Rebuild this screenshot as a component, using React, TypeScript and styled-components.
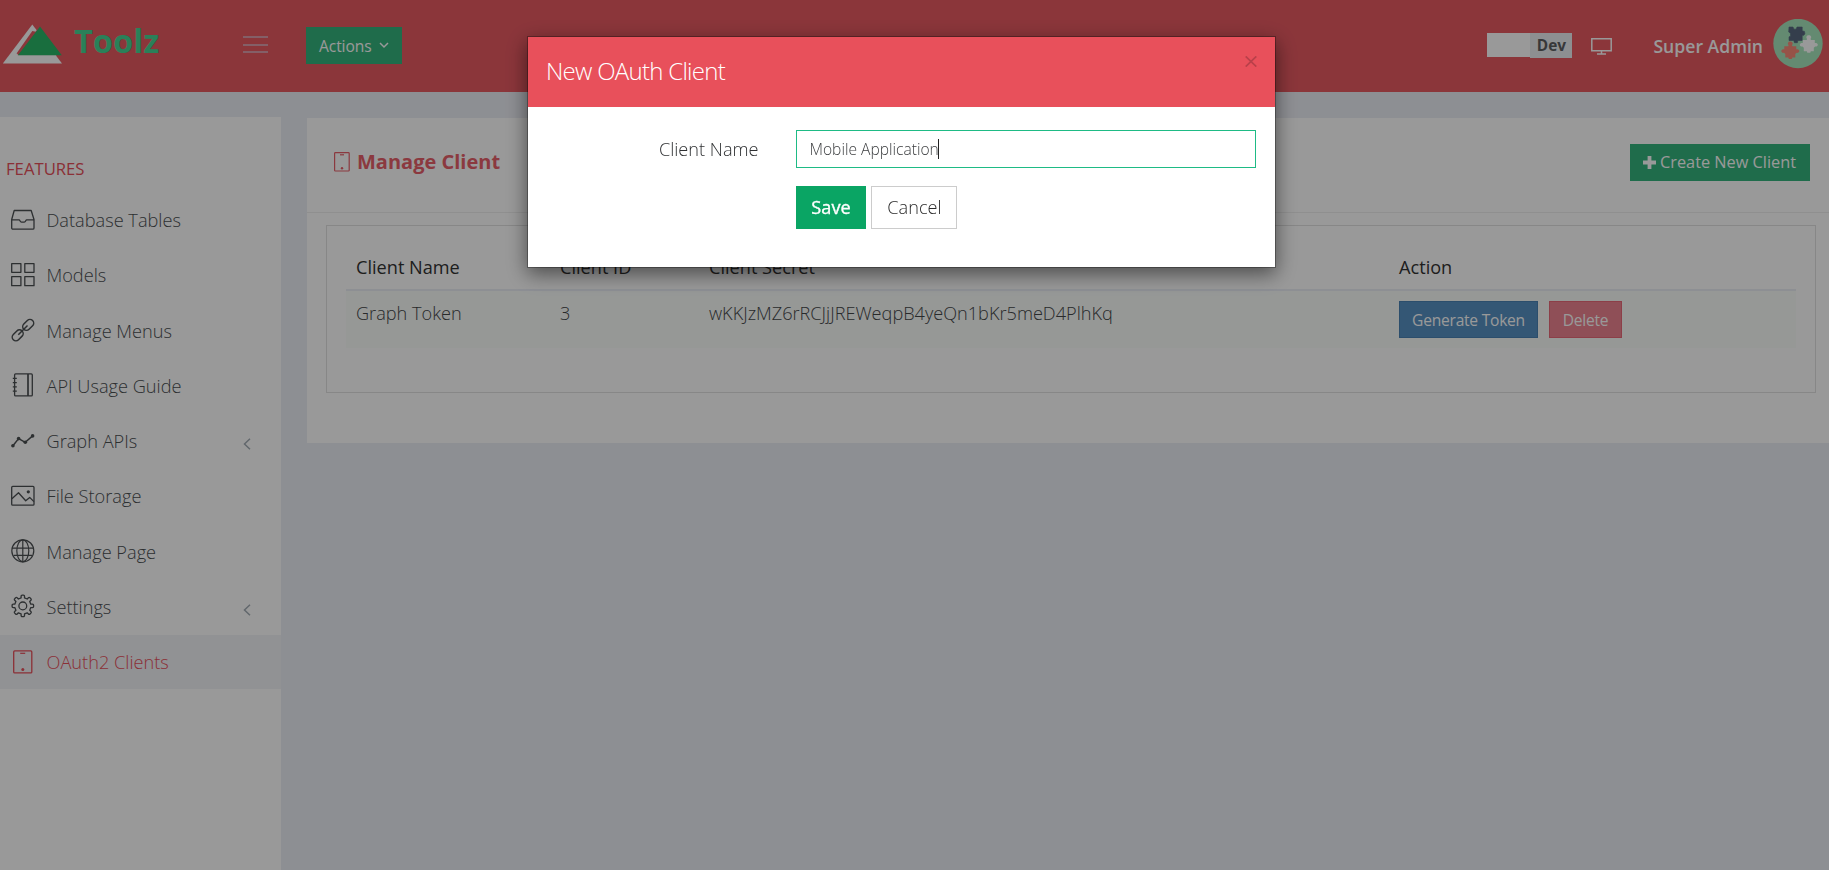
import React from 'react';
import styled, { createGlobalStyle, css } from 'styled-components';

const GlobalStyle = createGlobalStyle`
  * { box-sizing: border-box; }
  body {
    margin: 0;
    background: #eceef5;
    color: #444749;
    font: 300 18.15px/26px 'Open Sans', sans-serif;
    overflow: hidden;
  }
  button, input { font: inherit; border-radius: 0; margin: 0; }
`;

const Page = styled.div`
  height: 870px;
  display: flex;
  flex-direction: column;
`;

/* Header */
const Header = styled.header`
  height: 92px;
  flex: none;
  display: flex;
  background: #e85a62;
  color: #fff;
`;
const Brand = styled.div`
  width: 243px;
  display: flex;
  align-items: flex-start;
  padding: 24px 0 0 2px;
`;
const BrandName = styled.span`
  margin: -5px 0 0 11px;
  font-size: 32.6px;
  line-height: 44px;
  font-weight: 700;
  color: #46d594;
`;
const Burger = styled.div`
  width: 25px;
  height: 17px;
  margin-top: 36px;
  display: flex;
  flex-direction: column;
  justify-content: space-between;
`;
const BurgerLine = styled.span`
  height: 2px;
  background: #dc9fac;
`;
const ActionsButton = styled.button`
  width: 96px;
  height: 37px;
  margin: 27px 0 0 38px;
  padding: 0 13px;
  display: flex;
  align-items: center;
  justify-content: space-between;
  border: 0;
  background: #34b47d;
  color: #fff;
  font-size: 15.6px;
  font-weight: 400;
  letter-spacing: -0.1px;
`;
const HeaderRight = styled.div`
  margin-left: auto;
  padding: 0 6px 0 0;
  display: flex;
`;
const EnvBlank = styled.span`
  width: 43px;
  height: 24px;
  margin-top: 33px;
  background: #fff;
`;
const EnvTag = styled.span`
  width: 42px;
  height: 25px;
  margin-top: 33px;
  background: #eceef2;
  color: #5c5e61;
  font-size: 15.4px;
  line-height: 25px;
  font-weight: 700;
  text-align: center;
`;
const MonitorSlot = styled.span`
  display: flex;
  margin: 38px 0 0 19px;
`;
const UserName = styled.span`
  margin: 33px 10px 0 41px;
  font-size: 17.6px;
  font-weight: 600;
`;
const AvatarSlot = styled.span`
  display: flex;
  margin-top: 19px;
`;

/* Body */
const Body = styled.div`
  flex: 1;
  display: flex;
  align-items: stretch;
`;
const Sidebar = styled.nav`
  width: 281px;
  margin-top: 25px;
  padding-top: 39px;
  background: #fff;
`;
const SidebarTitle = styled.div`
  padding-left: 6px;
  margin-bottom: 11.3px;
  font-size: 16.7px;
  font-weight: 400;
  color: #e8505b;
`;
const MenuItem = styled.div<{ $active?: boolean }>`
  height: 54.3px;
  margin-bottom: 0.95px;
  padding: 0 30px 1.6px 10.5px;
  display: flex;
  align-items: center;
  color: #4c5053;
  ${p => p.$active && css`
    background: #f2f3f7;
    color: #e8505b;
  `}
`;
const MenuLabel = styled.span`
  flex: 1;
  margin-left: 12px;
  padding-top: 1px;
  font-size: 18.2px;
`;
const ChevronSlot = styled.span`
  display: flex;
  padding-top: 7px;
`;

const Panel = styled.main`
  flex: 1;
  height: 325px;
  margin: 26px 0 0 26px;
  background: #fff;
`;
const PanelHead = styled.div`
  height: 95px;
  padding: 26px 19px 0 27px;
  display: flex;
  justify-content: space-between;
  align-items: flex-start;
  border-bottom: 1px solid #efefef;
`;
const PanelTitle = styled.h5`
  margin: 5px 0 0;
  display: flex;
  align-items: center;
  gap: 7px;
  font-size: 20px;
  font-weight: 700;
  color: #e8606a;
`;
const CreateButton = styled.button`
  width: 180px;
  height: 37px;
  padding: 0 1px 2px 0;
  display: flex;
  align-items: center;
  justify-content: center;
  gap: 4px;
  border: 0;
  background: #34b47d;
  color: #fff;
  font-size: 16.3px;
  font-weight: 400;

  svg { margin-top: 2px; }
`;
const TableFrame = styled.section`
  height: 168px;
  margin: 12px 13px 0 19px;
  padding: 18px 19px;
  border: 1px solid #e1e1e1;
`;
const columns = css`
  display: grid;
  grid-template-columns: 204px 149px 690px 1fr;
  padding-left: 10px;
`;
const TableHead = styled.div`
  ${columns}
  height: 47px;
  padding-top: 10px;
  border-bottom: 2px solid #ebeff6;
  color: #333;
  font-weight: 400;
`;
const TableRow = styled.div`
  ${columns}
  height: 57px;
  padding-top: 10px;
  background: #fafdfb;
`;
const Cell = styled.span`
  height: 26px;
`;
const DataCell = styled(Cell)`
  margin-top: -1px;
`;
const RowActions = styled.div`
  display: flex;
  gap: 11px;
`;
const RowButton = styled.button<{ $tone: 'blue' | 'red' }>`
  height: 37px;
  padding: 0;
  width: ${p => (p.$tone === 'blue' ? 139 : 73)}px;
  border: 1px solid ${p => (p.$tone === 'blue' ? '#4a82b5' : '#ea6a78')};
  background: ${p => (p.$tone === 'blue' ? '#5791c3' : '#ee8491')};
  color: #fff;
  font-size: 15.6px;
  font-weight: 400;
  letter-spacing: -0.25px;
`;

/* Dialog */
const Backdrop = styled.div`
  position: fixed;
  inset: 0;
  padding: 36px 0 0 527px;
  background: rgba(0, 0, 0, 0.4);
`;
const Dialog = styled.div`
  width: 749px;
  height: 232px;
  border: 1px solid rgba(0, 0, 0, 0.3);
  background: #fff;
  background-clip: padding-box;
  box-shadow: 0 6px 19px rgba(0, 0, 0, 0.5);
`;
const DialogHead = styled.div`
  height: 70px;
  padding: 0 18px 0 18px;
  display: flex;
  justify-content: space-between;
  background: #e8505b;
`;
const DialogTitle = styled.h4`
  margin: 17px 0 0;
  font-size: 24px;
  line-height: 34px;
  font-weight: 300;
  letter-spacing: -0.72px;
  color: #fff;
`;
const CloseSlot = styled.span`
  display: flex;
  margin-top: 19px;
`;
const DialogForm = styled.div`
  display: grid;
  grid-template-columns: 230.5px 460px;
  column-gap: 37.5px;
  row-gap: 18px;
  padding-top: 23px;
`;
const FieldLabel = styled.label`
  padding-top: 6px;
  text-align: right;
  color: #2f3133;
`;
const Field = styled.div`
  height: 38px;
  padding: 0 12.5px;
  display: flex;
  align-items: center;
  border: 1px solid #1ebb85;
  font-size: 15.6px;
  color: #3c3e40;
`;
const Caret = styled.span`
  width: 1px;
  height: 20px;
  margin-left: -1px;
  background: #222;
`;
const FormButtons = styled.div`
  grid-column: 2;
  display: flex;
  gap: 5px;
`;
const SaveButton = styled.button`
  width: 70px;
  height: 43px;
  padding: 0 0 2px;
  border: 0;
  background: #0aa564;
  color: #fff;
  font-weight: 400;
  -webkit-text-stroke: 0.35px #fff;
`;
const CancelButton = styled.button`
  width: 86px;
  height: 43px;
  padding: 0 0 2px 1px;
  border: 1px solid #ccc;
  background: #fff;
  color: #2b2b2b;
`;

const MenuIcon = styled.svg.attrs({ viewBox: '0 0 24 24', width: 24, height: 24 })`
  flex: none;
  fill: none;
  stroke: currentColor;
  stroke-width: 1.3;
  stroke-linejoin: round;
`;

const icons: Record<string, React.ReactNode> = {
  drawer: <path d="M3.2 2.5h17l2.8 9V20a1.2 1.2 0 0 1-1.2 1.2H1.9A1.2 1.2 0 0 1 .7 20v-8.5zM.9 11.8h7.2c.9 0 .8 2.3 2.4 2.3h2.7c1.6 0 1.500-2.300 2.400-2.300h7.200" />,
  models: <path d="M.7.7h9.2v8.6H.7zM13.8.7H23v8.6h-9.2zM.7 13.7h9.2v9H.7zM13.8 13.7H23v9h-9.2z" />,
  link: (
    <g strokeWidth="1.5">
      <rect x="-6.2" y="-3.7" width="12.4" height="7.4" rx="3.7" transform="translate(17.2 6.9) rotate(-45)" />
      <rect x="-6.2" y="-3.7" width="12.4" height="7.4" rx="3.7" transform="translate(6.7 17.3) rotate(-45)" />
      <path d="M7.3 16.7l9.2-9.2" />
    </g>
  ),
  book: (
    <>
      <rect x="3.6" y=".9" width="17.7" height="22" rx="1" />
      <path d="M17 .9v22" strokeWidth="1.7" />
      <path d="M1.8 5.4h4M1.8 9.6h4M1.8 13.9h4M1.8 18.2h4" strokeWidth="1.2" />
    </>
  ),
  graph: (
    <>
      <path d="M1.9 16.8L7.6 9.6l6.7 3.7 7.3-6.4" strokeWidth="1.5" />
      <g fill="currentColor" stroke="none">
        <circle cx="1.9" cy="16.8" r="1.8" />
        <circle cx="7.6" cy="9.6" r="1.8" />
        <circle cx="14.3" cy="13.3" r="1.8" />
        <circle cx="21.6" cy="6.9" r="1.8" />
      </g>
    </>
  ),
  image: (
    <>
      <rect x=".7" y="2.4" width="22.3" height="18.8" rx="1" />
      <path d="M.9 14.8l6.6-6 7.2 8 4-3.4 4.2 4.2" />
      <circle cx="17.3" cy="7.8" r="1.6" fill="currentColor" stroke="none" />
    </>
  ),
  globe: (
    <g strokeWidth="1.2">
      <circle cx="11.8" cy="11.8" r="11" />
      <ellipse cx="11.8" cy="11.8" rx="6" ry="11" />
      <path d="M11.8.8v22M.9 9.2h21.9M2.4 16.3h18.8" />
    </g>
  ),
  gear: (
    <>
      <path d="M10.1 3.9V2.2a1.1 1.1 0 0 1 1.1-1.1h1.2a1.1 1.1 0 0 1 1.1 1.1v1.7l2.7 1.1 1.2-1.2a1.1 1.1 0 0 1 1.6 0l.9.9a1.1 1.1 0 0 1 0 1.6l-1.2 1.2 1.1 2.7h1.7a1.1 1.1 0 0 1 1.1 1.1v1.2a1.1 1.1 0 0 1-1.1 1.1h-1.7l-1.1 2.7 1.2 1.2a1.1 1.1 0 0 1 0 1.6l-.9.9a1.1 1.1 0 0 1-1.6 0l-1.2-1.2-2.7 1.1v1.7a1.1 1.1 0 0 1-1.1 1.1h-1.2a1.1 1.1 0 0 1-1.1-1.1v-1.7l-2.7-1.1-1.2 1.2a1.1 1.1 0 0 1-1.6 0l-.9-.9a1.1 1.1 0 0 1 0-1.6l1.2-1.2-1.1-2.7H2.2a1.1 1.1 0 0 1-1.1-1.1v-1.2a1.1 1.1 0 0 1 1.1-1.1h1.6l1.1-2.7-1.2-1.2a1.1 1.1 0 0 1 0-1.6l.9-.9a1.1 1.1 0 0 1 1.6 0L7.4 5z" />
      <circle cx="11.8" cy="11.9" r="3.9" />
    </>
  ),
  tablet: (
    <>
      <rect x="2.7" y=".9" width="18.1" height="22" rx="1" />
      <path d="M9.2 3.3h5" strokeWidth="1.2" />
      <circle cx="11.8" cy="19.4" r="1.5" fill="currentColor" stroke="none" />
    </>
  ),
};

const menu = [
  { icon: 'drawer', label: 'Database Tables' },
  { icon: 'models', label: 'Models' },
  { icon: 'link', label: 'Manage Menus' },
  { icon: 'book', label: 'API Usage Guide' },
  { icon: 'graph', label: 'Graph APIs', nested: true },
  { icon: 'image', label: 'File Storage' },
  { icon: 'globe', label: 'Manage Page' },
  { icon: 'gear', label: 'Settings', nested: true },
  { icon: 'tablet', label: 'OAuth2 Clients', active: true },
];

/* A jigsaw piece with a knob on each side, centred on the origin. */
const piece = 'M-6-4.5H-2.2L-1.7-5.5C-3.2-7.2-2.2-9.2 0-9.2S3.2-7.2 1.7-5.5L2.2-4.5H6V-1.4C7.3-1.6 9-1.2 9 .3S7.5 2.4 6.3 2L5 3.2V6.8H2L1.5 8.2H-1.5L-2 6.8H-5V3.2L-6.3 2C-7.5 2.4-9 1.8-9 .3S-7.3-1.6-6-1.4Z';

const Avatar = () => (
  <svg width="50" height="50" viewBox="0 0 50 50" strokeLinejoin="round">
    <circle cx="25" cy="24.5" r="24.7" fill="#a7e6bd" />
    <path
      d="M16 8h4l1 2.2h2L24 8h5.200v3.800l2.300.6.400 2.600-1.400 1.400-1.300-.2v5.300h-4.400l-.4 2.200h-3l-.6-2.200H16v-3.600l1.600-1-.2-2.700L15.700 13z"
      fill="#57687f" stroke="#57687f" strokeWidth=".6"
    />
    <path d={piece} transform="translate(35.8 25.5)" fill="#fff" />
    <path d={piece} transform="translate(17.3 31.8)" fill="#fb8b79" />
  </svg>
);

export default function App() {
  return (
    <>
      <GlobalStyle />
      <Page>
        <Header>
          <Brand>
            <svg width="61" height="40" viewBox="0 0 61 40">
              <path d="M30.3.6L60 39.5H.8z" fill="#fff" />
              <path d="M30.3 7L14.5 29.5l4 1.500L35 8z" fill="#e85a62" />
              <path d="M36.5 4l1.500-2L61 31.500H15z" fill="#e85a62" />
              <path d="M14 31.600H54.200" stroke="#fff" strokeWidth="1" />
              <path d="M38 2.600l21.800 28.600H15.900z" fill="#2bb768" />
            </svg>
            <BrandName>Toolz</BrandName>
          </Brand>
          <Burger><BurgerLine /><BurgerLine /><BurgerLine /></Burger>
          <ActionsButton>
            Actions
            <svg width="10" height="7" viewBox="0 0 10 7"><path d="M1 1l4 4 4-4" fill="none" stroke="#fff" strokeWidth="1.5" /></svg>
          </ActionsButton>
          <HeaderRight>
            <EnvBlank />
            <EnvTag>Dev</EnvTag>
            <MonitorSlot>
              <svg width="21" height="17" viewBox="0 0 21 17"><path d="M.8.8h19.400v12H.8zM10.500 13v2.500M6 16h9" fill="none" stroke="#fff" strokeWidth="1.5" /></svg>
            </MonitorSlot>
            <UserName>Super Admin</UserName>
            <AvatarSlot><Avatar /></AvatarSlot>
          </HeaderRight>
        </Header>
        <Body>
          <Sidebar>
            <SidebarTitle>FEATURES</SidebarTitle>
            {menu.map(item => (
              <MenuItem key={item.label} $active={item.active}>
                <MenuIcon>{icons[item.icon]}</MenuIcon>
                <MenuLabel>{item.label}</MenuLabel>
                {item.nested && (
                  <ChevronSlot>
                    <svg width="8" height="12" viewBox="0 0 8 12"><path d="M7 .8L1.500 6 7 11.200" fill="none" stroke="#a3adb5" strokeWidth="1.5" /></svg>
                  </ChevronSlot>
                )}
              </MenuItem>
            ))}
          </Sidebar>
          <Panel>
            <PanelHead>
              <PanelTitle>
                <svg width="16" height="20" viewBox="0 0 16 20" fill="none" stroke="currentColor">
                  <rect x=".6" y=".6" width="14.6" height="18.4" rx=".8" strokeWidth="1.2" />
                  <path d="M6 2.800h4" strokeWidth="1.2" />
                  <circle cx="8" cy="16.3" r="1.2" fill="currentColor" stroke="none" />
                </svg>
                Manage Client
              </PanelTitle>
              <CreateButton>
                <svg width="13" height="13" viewBox="0 0 13 13"><path d="M6.500 0v13M0 6.500h13" stroke="#fff" strokeWidth="3.8" /></svg>
                Create New Client
              </CreateButton>
            </PanelHead>
            <TableFrame>
              <TableHead>
                <Cell>Client Name</Cell><Cell>Client ID</Cell><Cell>Client Secret</Cell><Cell>Action</Cell>
              </TableHead>
              <TableRow>
                <DataCell>Graph Token</DataCell>
                <DataCell>3</DataCell>
                <DataCell>wKKJzMZ6rRCJjJREWeqpB4yeQn1bKr5meD4PlhKq</DataCell>
                <RowActions>
                  <RowButton $tone="blue">Generate Token</RowButton>
                  <RowButton $tone="red">Delete</RowButton>
                </RowActions>
              </TableRow>
            </TableFrame>
          </Panel>
        </Body>
      </Page>
      <Backdrop>
        <Dialog>
          <DialogHead>
            <DialogTitle>New OAuth Client</DialogTitle>
            <CloseSlot>
              <svg width="12" height="11" viewBox="0 0 12 11"><path d="M.7.4l10.600 10.200M11.300.4L.7 10.600" stroke="#b9404a" strokeWidth="1.7" /></svg>
            </CloseSlot>
          </DialogHead>
          <DialogForm>
            <FieldLabel>Client Name</FieldLabel>
            <Field>Mobile Application<Caret /></Field>
            <FormButtons>
              <SaveButton>Save</SaveButton>
              <CancelButton>Cancel</CancelButton>
            </FormButtons>
          </DialogForm>
        </Dialog>
      </Backdrop>
    </>
  );
}
